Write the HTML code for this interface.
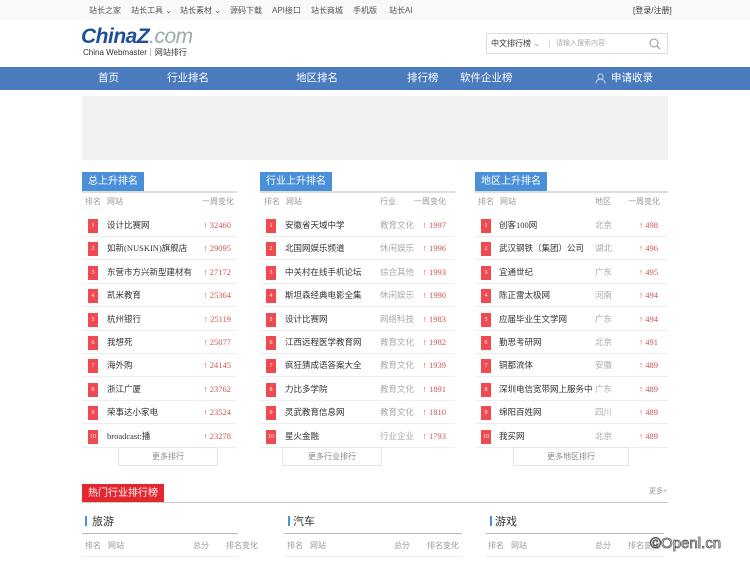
<!DOCTYPE html>
<html><head><meta charset="utf-8"><style>
*{margin:0;padding:0;box-sizing:border-box}
body{width:750px;height:562px;overflow:hidden;background:#fff;font-family:"Liberation Sans","Noto Sans CJK SC",sans-serif;color:#333;position:relative}
.a{position:absolute;white-space:nowrap}
.top{top:0;left:0;width:750px;height:20px;background:#f9f9f9;font-size:8px;color:#555}
.nav{top:67px;left:0;width:750px;height:23px;background:#4a7bbf;color:#fff;font-size:10.5px;line-height:23px}
.col{position:absolute;top:172px}
.tab{position:absolute;top:0;left:0;height:19px;background:#4a90d9;color:#fff;font-size:10px;line-height:19px;padding:0 6px}
.tl{position:absolute;top:19px;left:0;height:2px;background:#ddd}
.hd{position:absolute;top:24px;font-size:8px;color:#999}
.row{position:absolute;left:0;height:23px;border-bottom:1px solid #eee;font-size:8.5px;line-height:23px;font-family:"Liberation Serif","Noto Sans CJK SC",serif}
.row span{position:absolute}
.b{width:10px;height:14px;top:5px;background:#ee4a4f;color:#fff;font-size:6px;line-height:14px;text-align:center}
.c{color:#c55;text-align:right}
.g{color:#aaa}
.more{position:absolute;top:275px;height:19px;border:1px solid #e5e5e5;font-size:8px;color:#888;text-align:center;line-height:18px}
</style></head><body>
<div class="a top">
<span class="a" style="left:89px;top:5px">站长之家</span>
<span class="a" style="left:131px;top:5px">站长工具 ⌄</span>
<span class="a" style="left:180px;top:5px">站长素材 ⌄</span>
<span class="a" style="left:230px;top:5px">源码下载</span>
<span class="a" style="left:272px;top:5px">API接口</span>
<span class="a" style="left:311px;top:5px">站长商城</span>
<span class="a" style="left:353px;top:5px">手机版</span>
<span class="a" style="left:389px;top:5px">站长AI</span>
<span class="a" style="left:633px;top:5px;color:#333">[登录/注册]</span>
</div>
<div class="a" style="left:81px;top:25px;font-size:21px;font-weight:bold;font-style:italic;color:#1f4e9a;letter-spacing:-0.5px">China<span style="color:#1f4e9a">Z</span><span style="color:#9aa;font-weight:normal">.com</span></div>
<div class="a" style="left:83px;top:47px;font-size:8px;color:#333">China Webmaster｜网站排行</div>
<div class="a" style="left:486px;top:33px;width:182px;height:21px;border:1px solid #ddd;font-size:8px;line-height:19px">
<span class="a" style="left:4px;color:#333">中文排行榜 <span style="color:#999">⌄</span></span>
<span class="a" style="left:62px;top:5px;width:1px;height:9px;background:#ddd"></span>
<span class="a" style="left:69px;color:#aaa;font-size:7px">请输入搜索内容</span>
<svg class="a" style="left:162px;top:4px" width="12" height="12" viewBox="0 0 12 12"><circle cx="5" cy="5" r="4" fill="none" stroke="#999" stroke-width="1"/><path d="M8 8l3 3" stroke="#999" stroke-width="1.2"/></svg>
</div>
<div class="a nav">
<span class="a" style="left:98px">首页</span>
<span class="a" style="left:167px">行业排名</span>
<span class="a" style="left:296px">地区排名</span>
<span class="a" style="left:407px">排行榜</span>
<span class="a" style="left:460px">软件企业榜</span>
<svg class="a" style="left:595px;top:6px" width="11" height="11" viewBox="0 0 11 11"><circle cx="5.5" cy="3.5" r="2.6" fill="none" stroke="#cde" stroke-width="0.9"/><path d="M1 10.5c0-3 2-4.3 4.5-4.3s4.5 1.3 4.5 4.3" fill="none" stroke="#cde" stroke-width="0.9"/></svg>
<span class="a" style="left:611px">申请收录</span>
</div>
<div class="a" style="left:82px;top:96px;width:586px;height:64px;background:#f1f1f1"></div>

<!-- col1 -->
<div class="col" style="left:82px;width:155px">
<div class="tab">总上升排名</div><div class="tl" style="width:155px"></div>
<span class="hd" style="left:3px">排名</span><span class="hd" style="left:25px">网站</span><span class="hd" style="right:3px">一周变化</span>
<div class="row" style="top:42px;width:155px"><span class="b" style="left:6px">1</span><span style="left:25px">设计比赛网</span><span class="c" style="right:6px">↑ 32460</span></div>
<div class="row" style="top:65.4px;width:155px"><span class="b" style="left:6px">2</span><span style="left:25px">如新(NUSKIN)旗舰店</span><span class="c" style="right:6px">↑ 29095</span></div>
<div class="row" style="top:88.8px;width:155px"><span class="b" style="left:6px">3</span><span style="left:25px">东营市方兴新型建材有</span><span class="c" style="right:6px">↑ 27172</span></div>
<div class="row" style="top:112.2px;width:155px"><span class="b" style="left:6px">4</span><span style="left:25px">凯米教育</span><span class="c" style="right:6px">↑ 25364</span></div>
<div class="row" style="top:135.6px;width:155px"><span class="b" style="left:6px">5</span><span style="left:25px">杭州银行</span><span class="c" style="right:6px">↑ 25119</span></div>
<div class="row" style="top:159px;width:155px"><span class="b" style="left:6px">6</span><span style="left:25px">我想死</span><span class="c" style="right:6px">↑ 25077</span></div>
<div class="row" style="top:182.4px;width:155px"><span class="b" style="left:6px">7</span><span style="left:25px">海外购</span><span class="c" style="right:6px">↑ 24145</span></div>
<div class="row" style="top:205.8px;width:155px"><span class="b" style="left:6px">8</span><span style="left:25px">浙江广厦</span><span class="c" style="right:6px">↑ 23762</span></div>
<div class="row" style="top:229.2px;width:155px"><span class="b" style="left:6px">9</span><span style="left:25px">荣事达小家电</span><span class="c" style="right:6px">↑ 23524</span></div>
<div class="row" style="top:252.6px;width:155px"><span class="b" style="left:6px">10</span><span style="left:25px">broadcast:播</span><span class="c" style="right:6px">↑ 23278</span></div>
<div class="more" style="left:36px;width:100px">更多排行</div>
</div>

<!-- col2 -->
<div class="col" style="left:260px;width:195px">
<div class="tab">行业上升排名</div><div class="tl" style="width:195px"></div>
<span class="hd" style="left:4px">排名</span><span class="hd" style="left:26px">网站</span><span class="hd" style="left:120px">行业</span><span class="hd" style="right:9px">一周变化</span>
<div class="row" style="top:42px;width:195px"><span class="b" style="left:6px">1</span><span style="left:25px">安徽省天域中学</span><span class="g" style="left:120px">教育文化</span><span class="c" style="right:9px">↑ 1997</span></div>
<div class="row" style="top:65.4px;width:195px"><span class="b" style="left:6px">2</span><span style="left:25px">北国网娱乐频道</span><span class="g" style="left:120px">休闲娱乐</span><span class="c" style="right:9px">↑ 1996</span></div>
<div class="row" style="top:88.8px;width:195px"><span class="b" style="left:6px">3</span><span style="left:25px">中关村在线手机论坛</span><span class="g" style="left:120px">综合其他</span><span class="c" style="right:9px">↑ 1993</span></div>
<div class="row" style="top:112.2px;width:195px"><span class="b" style="left:6px">4</span><span style="left:25px">斯坦森经典电影全集</span><span class="g" style="left:120px">休闲娱乐</span><span class="c" style="right:9px">↑ 1990</span></div>
<div class="row" style="top:135.6px;width:195px"><span class="b" style="left:6px">5</span><span style="left:25px">设计比赛网</span><span class="g" style="left:120px">网络科技</span><span class="c" style="right:9px">↑ 1983</span></div>
<div class="row" style="top:159px;width:195px"><span class="b" style="left:6px">6</span><span style="left:25px">江西远程医学教育网</span><span class="g" style="left:120px">教育文化</span><span class="c" style="right:9px">↑ 1982</span></div>
<div class="row" style="top:182.4px;width:195px"><span class="b" style="left:6px">7</span><span style="left:25px">疯狂猜成语答案大全</span><span class="g" style="left:120px">教育文化</span><span class="c" style="right:9px">↑ 1939</span></div>
<div class="row" style="top:205.8px;width:195px"><span class="b" style="left:6px">8</span><span style="left:25px">力比多学院</span><span class="g" style="left:120px">教育文化</span><span class="c" style="right:9px">↑ 1891</span></div>
<div class="row" style="top:229.2px;width:195px"><span class="b" style="left:6px">9</span><span style="left:25px">灵武教育信息网</span><span class="g" style="left:120px">教育文化</span><span class="c" style="right:9px">↑ 1810</span></div>
<div class="row" style="top:252.6px;width:195px"><span class="b" style="left:6px">10</span><span style="left:25px">星火金融</span><span class="g" style="left:120px">行业企业</span><span class="c" style="right:9px">↑ 1793</span></div>
<div class="more" style="left:22px;width:100px">更多行业排行</div>
</div>

<!-- col3 -->
<div class="col" style="left:475px;width:193px">
<div class="tab">地区上升排名</div><div class="tl" style="width:193px"></div>
<span class="hd" style="left:3px">排名</span><span class="hd" style="left:25px">网站</span><span class="hd" style="left:120px">地区</span><span class="hd" style="right:8px">一周变化</span>
<div class="row" style="top:42px;width:193px"><span class="b" style="left:6px">1</span><span style="left:24px">创客100网</span><span class="g" style="left:120px">北京</span><span class="c" style="right:10px">↑ 498</span></div>
<div class="row" style="top:65.4px;width:193px"><span class="b" style="left:6px">2</span><span style="left:24px">武汉钢铁（集团）公司</span><span class="g" style="left:120px">湖北</span><span class="c" style="right:10px">↑ 496</span></div>
<div class="row" style="top:88.8px;width:193px"><span class="b" style="left:6px">3</span><span style="left:24px">宜通世纪</span><span class="g" style="left:120px">广东</span><span class="c" style="right:10px">↑ 495</span></div>
<div class="row" style="top:112.2px;width:193px"><span class="b" style="left:6px">4</span><span style="left:24px">陈正雷太极网</span><span class="g" style="left:120px">河南</span><span class="c" style="right:10px">↑ 494</span></div>
<div class="row" style="top:135.6px;width:193px"><span class="b" style="left:6px">5</span><span style="left:24px">应届毕业生文学网</span><span class="g" style="left:120px">广东</span><span class="c" style="right:10px">↑ 494</span></div>
<div class="row" style="top:159px;width:193px"><span class="b" style="left:6px">6</span><span style="left:24px">勤思考研网</span><span class="g" style="left:120px">北京</span><span class="c" style="right:10px">↑ 491</span></div>
<div class="row" style="top:182.4px;width:193px"><span class="b" style="left:6px">7</span><span style="left:24px">铜都流体</span><span class="g" style="left:120px">安徽</span><span class="c" style="right:10px">↑ 489</span></div>
<div class="row" style="top:205.8px;width:193px"><span class="b" style="left:6px">8</span><span style="left:24px">深圳电信宽带网上服务中</span><span class="g" style="left:120px">广东</span><span class="c" style="right:10px">↑ 489</span></div>
<div class="row" style="top:229.2px;width:193px"><span class="b" style="left:6px">9</span><span style="left:24px">绵阳百姓网</span><span class="g" style="left:120px">四川</span><span class="c" style="right:10px">↑ 489</span></div>
<div class="row" style="top:252.6px;width:193px"><span class="b" style="left:6px">10</span><span style="left:24px">我买网</span><span class="g" style="left:120px">北京</span><span class="c" style="right:10px">↑ 489</span></div>
<div class="more" style="left:38px;width:116px">更多地区排行</div>
</div>

<!-- hot section -->
<div class="a" style="left:82px;top:484px;height:19px;background:#e3262f;color:#fff;font-size:10px;line-height:19px;padding:0 6px">热门行业排行榜</div>
<div class="a" style="left:82px;top:502px;width:586px;height:1px;background:#ccc"></div>
<div class="a" style="left:649px;top:486px;font-size:7px;color:#999">更多+</div>

<div class="a" style="left:85px;top:516px;width:2px;height:10px;background:#4a90d9"></div>
<div class="a" style="left:92px;top:513px;font-size:11px">旅游</div>
<div class="a" style="left:82px;top:533px;width:156px;height:1px;background:#bbb"></div>
<div class="a" style="left:85px;top:540px;font-size:8px;color:#999">排名</div><div class="a" style="left:108px;top:540px;font-size:8px;color:#999">网站</div><div class="a" style="left:193px;top:540px;font-size:8px;color:#999">总分</div><div class="a" style="left:226px;top:540px;font-size:8px;color:#999">排名变化</div>
<div class="a" style="left:82px;top:556px;width:156px;height:1px;background:#eee"></div>

<div class="a" style="left:288px;top:516px;width:2px;height:10px;background:#4a90d9"></div>
<div class="a" style="left:293px;top:513px;font-size:11px">汽车</div>
<div class="a" style="left:284px;top:533px;width:178px;height:1px;background:#bbb"></div>
<div class="a" style="left:287px;top:540px;font-size:8px;color:#999">排名</div><div class="a" style="left:310px;top:540px;font-size:8px;color:#999">网站</div><div class="a" style="left:394px;top:540px;font-size:8px;color:#999">总分</div><div class="a" style="left:427px;top:540px;font-size:8px;color:#999">排名变化</div>
<div class="a" style="left:284px;top:556px;width:178px;height:1px;background:#eee"></div>

<div class="a" style="left:490px;top:516px;width:2px;height:10px;background:#4a90d9"></div>
<div class="a" style="left:495px;top:513px;font-size:11px">游戏</div>
<div class="a" style="left:486px;top:533px;width:178px;height:1px;background:#bbb"></div>
<div class="a" style="left:488px;top:540px;font-size:8px;color:#999">排名</div><div class="a" style="left:511px;top:540px;font-size:8px;color:#999">网站</div><div class="a" style="left:595px;top:540px;font-size:8px;color:#999">总分</div><div class="a" style="left:628px;top:540px;font-size:8px;color:#999">排名变化</div>
<div class="a" style="left:486px;top:556px;width:178px;height:1px;background:#eee"></div>
<div class="a" style="left:650px;top:535px;font-size:15px;color:#fff;-webkit-text-stroke:0.8px #555">©Openl.cn</div>
</body></html>
